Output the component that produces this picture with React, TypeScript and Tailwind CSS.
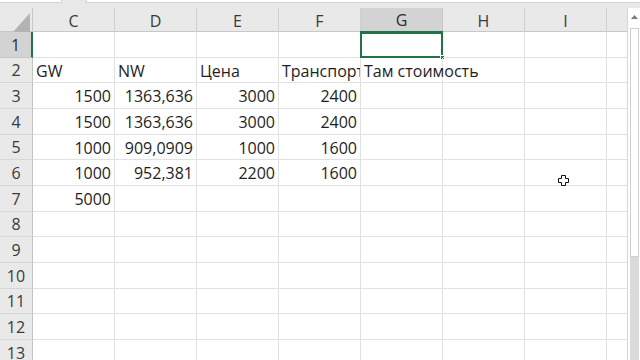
import React from "react";

type Cell = { v: string; align?: "l" | "r"; clip?: boolean };

const COLS = ["C", "D", "E", "F", "G", "H", "I", ""];

const rowHeights = [
  "h-[26px]", "h-[25px]", "h-[26px]", "h-[26px]", "h-[25px]", "h-[26px]",
  "h-[26px]", "h-[25px]", "h-[26px]", "h-[26px]", "h-[25px]", "h-[26px]", "h-[26px]",
];

const data: Record<number, Record<number, Cell>> = {
  2: {
    0: { v: "GW", align: "l" },
    1: { v: "NW", align: "l" },
    2: { v: "Цена", align: "l" },
    3: { v: "Транспортировка", align: "l", clip: true },
    4: { v: "Там стоимость", align: "l" },
  },
  3: { 0: { v: "1500" }, 1: { v: "1363,636" }, 2: { v: "3000" }, 3: { v: "2400" } },
  4: { 0: { v: "1500" }, 1: { v: "1363,636" }, 2: { v: "3000" }, 3: { v: "2400" } },
  5: { 0: { v: "1000" }, 1: { v: "909,0909" }, 2: { v: "1000" }, 3: { v: "1600" } },
  6: { 0: { v: "1000" }, 1: { v: "952,381" }, 2: { v: "2200" }, 3: { v: "1600" } },
  7: { 0: { v: "5000" } },
};

const gridCols = "grid grid-cols-[33px_82px_82px_82px_82px_82px_82px_82px_20px]";

function FatCross() {
  return (
    <svg width="11" height="11" viewBox="0 0 11 11" className="absolute left-[558px] top-[175px]">
      <path
        d="M3.5 0.5h4v3h3v4h-3v3h-4v-3h-3v-4h3z"
        fill="#ffffff"
        stroke="#111111"
        strokeWidth="1"
      />
    </svg>
  );
}

export default function App() {
  return (
    <div className="relative w-[640px] h-[360px] overflow-hidden bg-white font-['Open_Sans',sans-serif] text-[16px] text-[#1e1e1e]">
      {/* strip below the formula bar */}
      <div className="h-[8px] bg-[#e8e8e8] flex items-start">
        <div className="w-[62px] h-[3px] bg-white border-b border-r border-[#d4d4d4]" />
        <div className="w-[24px]" />
        <div className="flex-1 h-[3px] bg-white border-b border-l border-[#d4d4d4]" />
      </div>

      <div className="flex">
        {/* sheet */}
        <div className="w-[627px]">
          {/* column headers */}
          <div className={`${gridCols} h-[24px] bg-[#e9e9e9] border-b border-[#c8c8c8]`}>
            <div className="flex items-end justify-end pr-[2px] pb-[2px] border-r border-[#c8c8c8]">
              <div className="w-0 h-0 border-l-[17px] border-l-transparent border-b-[19px] border-b-[#b3b3b3]" />
            </div>
            {COLS.map((c, i) =>
              c === "G" ? (
                <div
                  key={i}
                  className="flex items-center justify-center bg-[#d3d3d3] border-r border-[#c8c8c8] border-b-2 border-b-[#217346] text-[#2b2b2b]"
                >
                  {c}
                </div>
              ) : (
                <div
                  key={i}
                  className={`flex items-center justify-center text-[#3a3a3a] ${i < 7 ? "border-r border-[#d0d0d0]" : ""}`}
                >
                  {c}
                </div>
              )
            )}
          </div>

          {/* rows */}
          {rowHeights.map((h, r) => {
            const rowNo = r + 1;
            const rowData = data[rowNo] || {};
            return (
              <div key={rowNo} className={`${gridCols} ${h}`}>
                {rowNo === 1 ? (
                  <div className="flex items-center justify-center bg-[#d3d3d3] border-b border-[#c8c8c8] border-r-2 border-r-[#217346] text-[#2b2b2b]">
                    {rowNo}
                  </div>
                ) : (
                  <div className="flex items-center justify-center bg-[#e9e9e9] border-r border-[#c4c4c4] border-b border-b-[#d6d6d6] text-[#3a3a3a]">
                    {rowNo}
                  </div>
                )}
                {COLS.map((_, ci) => {
                  const cell = rowData[ci];
                  const selected = rowNo === 1 && ci === 4;
                  return (
                    <div
                      key={ci}
                      className={`relative flex items-center border-b border-[#e1e1e1] ${ci < 7 ? "border-r" : ""} ${
                        cell?.align === "l" ? "justify-start pl-[3px]" : "justify-end pr-[3px]"
                      } ${cell?.clip ? "overflow-hidden" : ""}`}
                    >
                      {cell && <span className="whitespace-nowrap leading-none pt-[1px]">{cell.v}</span>}
                      {selected && (
                        <>
                          <div className="absolute left-[-1px] top-[-1px] right-[-1px] bottom-[-1px] border-2 border-[#217346]" />
                          <div className="absolute right-[-3px] bottom-[-3px] w-[5px] h-[5px] bg-[#217346] border border-white" />
                        </>
                      )}
                    </div>
                  );
                })}
              </div>
            );
          })}
        </div>

        {/* vertical scrollbar */}
        <div className="w-[13px] h-[352px] bg-white border-l border-[#d6d6d6] flex flex-col items-center">
          <div className="h-[13px] w-[10px] mt-[2px] flex items-center justify-center">
            <svg width="7" height="4" viewBox="0 0 7 4">
              <path d="M0 4 L3.5 0 L7 4 Z" fill="#7a7a7a" />
            </svg>
          </div>
          <div className="w-[9px] h-[229px] mt-[5px] bg-white border border-[#cfcfcf]" />
          <div className="w-[9px] flex-1 bg-[#dadada]" />
        </div>
      </div>

      <FatCross />
    </div>
  );
}
